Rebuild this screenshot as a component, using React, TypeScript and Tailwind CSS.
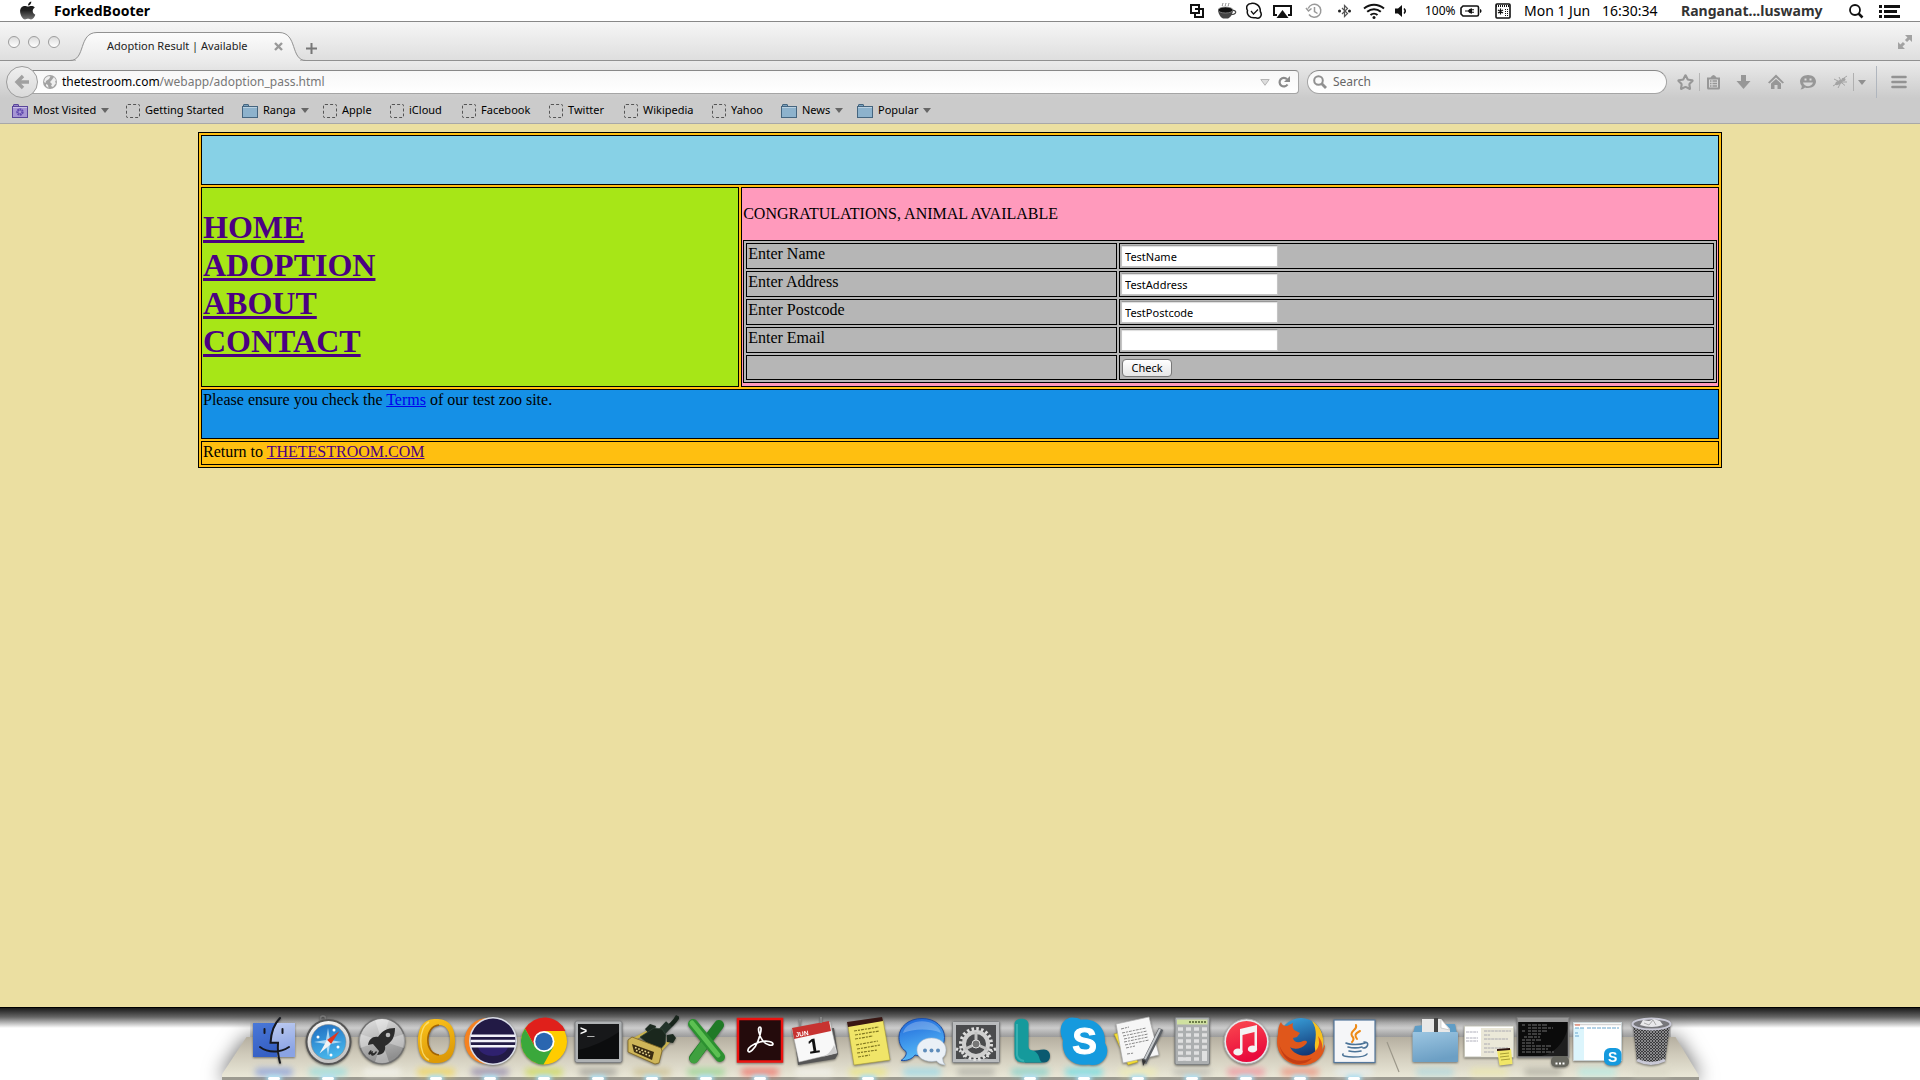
import type { ReactNode } from "react";
import { Star } from "lucide-react";

/* ---------- Menu bar ---------- */

function MenuIcon({ w, label, children, vb = 24 }: { w: string; label: string; children: ReactNode; vb?: number }) {
  return (
    <button aria-label={label} className={`flex shrink-0 items-center ${w}`}>
      <svg width={vb} height={18} viewBox={`0 0 ${vb} 18`} fill="none" stroke="#111" className="shrink-0">
        {children}
      </svg>
    </button>
  );
}

function MenuBar() {
  return (
    <header className="flex h-[21px] shrink-0 items-center justify-between bg-white pl-5 pr-5 text-sm leading-5 text-black">
      <div className="flex items-center">
        <button aria-label="Apple menu" className="w-[34px]">
          <svg width="16" height="19" viewBox="0 0 16 19">
            <defs>
              <linearGradient id="apple" x1="0" y1="0" x2="0" y2="1">
                <stop offset="0" stopColor="#111" />
                <stop offset=".5" stopColor="#222" />
                <stop offset="1" stopColor="#777" />
              </linearGradient>
            </defs>
            <path fill="url(#apple)" d="M8 5.6c-.9 0-1.700-.7-3.200-.7C2 4.900.1 7 .1 10.300c0 3.700 2.500 8.200 4.900 8.200 1.200 0 1.700-.7 3-.7s1.700.7 3 .7c1.900 0 3.500-2.700 4.300-4.800-1.500-.6-2.600-1.900-2.600-3.700 0-1.600.9-2.900 2.100-3.600-.9-1.100-2.200-1.500-3.300-1.500-1.500 0-2.600.7-3.500.7zM8 4.500C7.900 2.500 9.400.7 11.300.4c.2 2-1.400 4-3.300 4.100z" />
          </svg>
        </button>
        <span className="font-bold">ForkedBooter</span>
      </div>
      <div className="flex h-full items-center">
        <MenuIcon w="w-7" label="Clipboard manager">
          <path strokeWidth="2" d="M5 11H1V3h8v4M5 7h8v8H5V11M9 7v4H5" />
        </MenuIcon>
        <MenuIcon w="w-7" label="Caffeine">
          <path fill="#444" stroke="none" d="M0 8c.5 5 3 7.500 5 8.500h5c2.500-1.200 4.500-3.500 5-8.500z" />
          <ellipse cx="7.500" cy="8" rx="7.500" ry="3" fill="#111" stroke="#888" strokeWidth=".8" />
          <path strokeWidth="1.200" d="M14.500 8.500c5-.5 4 4-1.500 4" stroke="#444" />
          <path strokeWidth="1" d="M4.500 4c-1-1.500 1-1.500.3-3M7.500 4c-1-1.500 1-1.500.3-3M10.500 4c-1-1.500 1-1.500.3-3" stroke="#888" />
        </MenuIcon>
        <MenuIcon w="w-[27px]" label="Skype status">
          <path strokeWidth="1.500" d="M5 1.500C8 1 14.500 2 14.300 9.500 17 14 13 17.500 9.500 15.700 3 16.500.5 12 1.500 8.500-.5 5 1.500 1.500 5 1.500z" />
          <path strokeWidth="1.200" d="M5 9l2.500 3L12 7.500" />
        </MenuIcon>
        <MenuIcon w="w-8" label="AirPlay">
          <path strokeWidth="2" d="M4 13H1V4h17v9h-3" />
          <path fill="#111" stroke="none" d="M9.500 8l6 8h-12z" />
        </MenuIcon>
        <MenuIcon w="w-[33px]" label="Time Machine">
          <g stroke="#999" strokeWidth="1.500">
            <path d="M3.200 6.500A6.500 6.500 0 1 1 4 12.500M9.500 5v4.500l3 2M1 6l2.500 3L6.500 6.500" />
          </g>
        </MenuIcon>
        <MenuIcon w="w-[25px]" label="Bluetooth">
          <path stroke="#555" strokeWidth="1.200" d="M4 6l5.500 5.500L6.500 14.500V3.500l3 3L4 12" />
          <circle cx="1.500" cy="9" r="1.500" fill="#222" stroke="none" />
          <circle cx="11.500" cy="9" r="1.500" fill="#222" stroke="none" />
        </MenuIcon>
        <MenuIcon w="w-8" label="Wi-Fi">
          <path strokeWidth="2" d="M1 6.500c6-5 14-5 20 0M4.200 9.800c4-3.500 9.600-3.500 13.600 0M7.500 13c2-1.800 5-1.800 7 0" />
          <circle cx="11" cy="15.500" r="1.500" fill="#111" stroke="none" />
        </MenuIcon>
        <MenuIcon w="w-[30px]" label="Volume">
          <path fill="#111" stroke="none" d="M0 6.500h3L7 3v12l-4-3.500H0z" />
          <path strokeWidth="1.500" d="M9 6.500c1.500 1.500 1.500 3.500 0 5" />
        </MenuIcon>
        <span className="w-[35px] text-xs">100%</span>
        <MenuIcon w="w-[35px]" label="Battery">
          <path strokeWidth="1.600" d="M3 4h14q1.500 0 1.500 1.500v7q0 1.500-1.500 1.500H3L1 12V6z" />
          <path fill="#111" stroke="none" d="M20 7c2 .5 2 3.500 0 4zM5 8.500h3Q9 6.500 12 6.300v5.400Q9 11.500 8 9.500H5zM12 7.200h2v1h-2zM12 9.800h2v1h-2z" />
        </MenuIcon>
        <MenuIcon w="w-[29px]" label="Input menu">
          <rect x="1" y="2" width="14" height="14" rx="1" strokeWidth="1.600" />
          <path strokeWidth="2" strokeDasharray="1 1" d="M1 4h14" />
          <path strokeWidth="1.200" d="M5.500 6.500v6M3 8l5 3M8 8l-5 3" />
          <path strokeDasharray="1 1" d="M10.500 7v7M12.500 7v7" />
        </MenuIcon>
        <span className="flex w-[157px] whitespace-nowrap">
          <span className="w-[78px]">Mon 1 Jun</span>
          <span>16:30:34</span>
        </span>
        <span className="w-[168px] whitespace-nowrap font-bold text-[#333]">Ranganat...luswamy</span>
        <MenuIcon w="w-[30px]" label="Spotlight" vb={20}>
          <circle cx="6" cy="8" r="5" strokeWidth="1.800" />
          <path strokeWidth="2.500" d="M9.500 11.500l4 4" />
        </MenuIcon>
        <MenuIcon w="w-[21px]" label="Notification Center" vb={21}>
          <path strokeWidth="3" d="M0 4.500h3M0 9.500h3M0 14.500h3M5 4.500h16M5 9.500h13M5 14.500h16" />
        </MenuIcon>
      </div>
    </header>
  );
}

/* ---------- Browser chrome ---------- */

function TabStrip() {
  return (
    <div className="flex h-[39px] items-end bg-linear-to-b from-[#f6f6f6] to-[#dedede] shadow-[inset_0_-1px_0_#919191]">
      <div className="flex w-[70px] gap-2 self-center pl-2">
        <button aria-label="Close window" className="size-3 rounded-full border border-[#9d9d9d] bg-linear-to-b from-[#dcdcdc] to-white" />
        <button aria-label="Minimise window" className="size-3 rounded-full border border-[#9d9d9d] bg-linear-to-b from-[#dcdcdc] to-white" />
        <button aria-label="Zoom window" className="size-3 rounded-full border border-[#9d9d9d] bg-linear-to-b from-[#dcdcdc] to-white" />
      </div>
      <div className="relative flex h-[29px] w-[236px] items-center pl-[37px] text-[11px] text-[#222]">
        <svg width="236" height="29" viewBox="0 0 236 29" className="absolute inset-0">
          <defs>
            <linearGradient id="tab" x1="0" y1="0" x2="0" y2="1">
              <stop offset="0" stopColor="#fcfcfc" />
              <stop offset="1" stopColor="#ebebeb" />
            </linearGradient>
          </defs>
          <path fill="url(#tab)" stroke="#919191" d="M0 28.500c16 0 8-28 27-28H209c19 0 11 28 27 28" />
          <path stroke="#ebebeb" d="M6 28.500h224" />
        </svg>
        <a href="#tab" className="relative w-[167px] whitespace-nowrap">Adoption Result | Available</a>
        <button aria-label="Close tab" className="relative">
          <svg width="9" height="9" viewBox="0 0 9 9" stroke="#999" strokeWidth="2.400">
            <path d="M1 1l7 7M8 1L1 8" />
          </svg>
        </button>
      </div>
      <button aria-label="New tab" className="mb-[7px]">
        <svg width="11" height="11" viewBox="0 0 11 11" stroke="#777" strokeWidth="2">
          <path d="M5.500 0v11M0 5.500h11" />
        </svg>
      </button>
      <button aria-label="Full screen" className="mb-3 ml-auto mr-2">
        <svg width="14" height="14" viewBox="0 0 14 14" fill="#a2a2a2" stroke="#a2a2a2" strokeWidth="3">
          <path stroke="none" d="M7 0h7v7zM0 7v7h7z" />
          <path d="M8 6l3-3M6 8l-3 3" />
        </svg>
      </button>
    </div>
  );
}

function ToolButton({ w, label, children }: { w: string; label: string; children: ReactNode }) {
  return (
    <button aria-label={label} className={`flex shrink-0 items-center ${w}`}>
      <svg width="16" height="18" viewBox="0 0 16 18" fill="#979797" className="shrink-0">
        {children}
      </svg>
    </button>
  );
}

function NavBar() {
  return (
    <div className="flex h-[38px] items-center pt-1 pl-[6px]">
      <button aria-label="Back" className="z-10 flex size-8 shrink-0 items-center justify-center rounded-full border border-[#9c9c9c] bg-linear-to-b from-[#efefef] to-[#dadada]">
        <svg width="16" height="16" viewBox="0 0 16 16" fill="none" stroke="#a0a0a0" strokeWidth="3.400">
          <path d="M15 8H3M9 2L3 8l6 6" />
        </svg>
      </button>
      <div className="-ml-1.5 flex h-6 flex-1 items-center rounded-r-sm border border-[#a5a5a5] border-t-[#888] bg-linear-to-b from-[#f7f7f7] to-white pl-[10px]">
        <svg width="14" height="14" viewBox="0 0 14 14" className="mr-[5px] shrink-0">
          <circle cx="7" cy="7" r="7" fill="#a3a3a3" />
          <path fill="#efefef" d="M2 3.500C4 1 6 1 7.500 1.500L6 4 3 6 2.500 8 1 7zM8 6l3-4 2 3-1 2 1 1-3 4-2-1 1-2-2-2zM3 9l2 1 .5 3L3 11z" />
        </svg>
        <div role="textbox" aria-label="Address" className="flex-1 whitespace-nowrap text-xs text-[#777]">
          <span className="text-black">thetestroom.com</span>/webapp/adoption_pass.html
        </div>
        <svg width="10" height="7" viewBox="0 0 10 7" className="mr-[8px]" fill="#ddd" stroke="#b5b5b5">
          <path d="M.8.5h8.400L5 6.300z" />
        </svg>
        <button aria-label="Reload" className="mr-2">
          <svg width="12" height="12" viewBox="0 0 12 12" fill="none" stroke="#8a8a8a" strokeWidth="2.200">
            <path d="M9.500 8.500A4.300 4.300 0 1 1 9 3.200" />
            <path fill="#8a8a8a" stroke="none" d="M12 0v6H6z" />
          </svg>
        </button>
      </div>
      <div className="ml-2 flex h-6 w-[360px] items-center rounded-full border border-[#a5a5a5] border-t-[#888] bg-linear-to-b from-[#f7f7f7] to-white pl-[5px]">
        <svg width="14" height="14" viewBox="0 0 14 14" fill="none" stroke="#909090" className="shrink-0">
          <circle cx="5.500" cy="5.500" r="4.300" strokeWidth="2" />
          <path strokeWidth="2.800" d="M8.500 8.500l4.500 4.500" />
        </svg>
        <input aria-label="Search" placeholder="Search" className="ml-[6px] w-full bg-transparent text-xs text-[#555] outline-none placeholder:text-[#666]" />
      </div>
      <div className="ml-[10px] flex items-center">
        <button aria-label="Bookmark this page" className="w-[22px]">
          <Star size={17} stroke="#979797" strokeWidth={3} />
        </button>
        <span className="mr-[6px] h-[18px] w-px bg-[#b5b5b5]" />
        <ToolButton w="w-[30px]" label="Bookmarks">
          <path fillRule="evenodd" d="M1 4.500h3.500q3-5 6 0H14V15q0 1.500-1.500 1.500h-10Q1 16.500 1 15zM3 6.500v8h9v-8z" />
          <path d="M4 7.300h1.500v1.500H4zM6.500 7.300H11v1.500H6.500zM4 9.800h1.500v1.500H4zM6.500 9.800H11v1.500H6.500zM4 12.300h1.500v1.500H4zM6.500 12.300H11v1.500H6.500z" />
        </ToolButton>
        <ToolButton w="w-8" label="Downloads">
          <path d="M5 2h5v6h4.500l-7 8-7-8H5z" />
        </ToolButton>
        <ToolButton w="w-8" label="Home">
          <path d="M8 1.500l8 8-1.500 1L8 4.500l-6.500 6L0 9.500z" />
          <path d="M3 10.500L8 6l5 4.500V16H9.500v-4h-3v4H3z" />
        </ToolButton>
        <ToolButton w="w-8" label="Chat">
          <path fillRule="evenodd" d="M8 2c4.500 0 8 2.800 8 6.500S12.500 15 8 15q-1.500 0-3-.5-2 2-4.500 2 1.500-1.800 1.300-3.500Q0 11 0 8.500C0 4.800 3.500 2 8 2zM4.500 5.500v2h2v-2zm5 0v2h2v-2zM3 9.500c1.500 5 8.500 5 10 0z" />
        </ToolButton>
        <ToolButton w="w-[21px]" label="Firebug">
          <g opacity=".8">
            <ellipse cx="7" cy="9.500" rx="4" ry="2" transform="rotate(-25 7 9.500)" />
            <ellipse cx="11.500" cy="6.500" rx="2" ry="1.700" />
            <path fill="none" stroke="#979797" d="M6 8L2 6M6 10l-5 3M8 11l-2 4M9 8L7 4M10 10l3 2.500M12 5l3-2M10 9l5 0" />
          </g>
        </ToolButton>
        <span className="mr-[4px] h-[18px] w-px bg-[#b0b0b0]" />
        <button aria-label="Firebug options" className="w-[18px]">
          <svg width="8" height="5" viewBox="0 0 8 5" fill="#909090"><path d="M0 0h8L4 5z" /></svg>
        </button>
        <span className="mr-[14px] h-8 w-px bg-[#b0b6be]" />
        <button aria-label="Open menu" className="mr-[13px]">
          <svg width="16" height="14" viewBox="0 0 16 14" stroke="#939393" strokeWidth="2.600" strokeLinecap="round">
            <path d="M1.500 2h13M1.500 7h13M1.500 12h13" />
          </svg>
        </button>
      </div>
    </div>
  );
}

type Mark = { name: string; kind: "smart" | "folder" | "page"; w: string };

const bookmarks: Mark[] = [
  { name: "Most Visited", kind: "smart", w: "w-[114px]" },
  { name: "Getting Started", kind: "page", w: "w-[116px]" },
  { name: "Ranga", kind: "folder", w: "w-[81px]" },
  { name: "Apple", kind: "page", w: "w-[67px]" },
  { name: "iCloud", kind: "page", w: "w-[72px]" },
  { name: "Facebook", kind: "page", w: "w-[87px]" },
  { name: "Twitter", kind: "page", w: "w-[75px]" },
  { name: "Wikipedia", kind: "page", w: "w-[88px]" },
  { name: "Yahoo", kind: "page", w: "w-[69px]" },
  { name: "News", kind: "folder", w: "w-[76px]" },
  { name: "Popular", kind: "folder", w: "w-[76px]" },
];

function Bookmarks() {
  return (
    <nav className="flex h-6 items-center pb-px pl-3 text-[11px] text-black">
      {bookmarks.map((b) => (
        <a key={b.name} href="#bookmark" className={`flex shrink-0 items-center whitespace-nowrap ${b.w}`}>
          {b.kind === "page" ? (
            <span className="mr-[5px] size-[14px] rounded-xs border border-dashed border-[#555]" />
          ) : (
            <svg width="16" height="14" viewBox="0 0 16 14" className="mr-[5px]">
              <path d="M1.500 3V1q0-.5.5-.5h4q.5 0 .5.5v2z" fill={b.kind === "smart" ? "#9a86c8" : "#7aa2bf"} stroke={b.kind === "smart" ? "#59459a" : "#45657f"} />
              <rect x=".5" y="2.500" width="15" height="11" fill={b.kind === "smart" ? "#a695d4" : "#8db2cc"} stroke={b.kind === "smart" ? "#59459a" : "#45657f"} />
              <path d="M1 3.500h14" stroke="#fff" opacity=".4" />
              {b.kind === "smart" && <circle cx="8" cy="8" r="2.500" fill="none" stroke="#6048ae" strokeWidth="2.400" strokeDasharray="1.700 .5" />}
            </svg>
          )}
          {b.name}
          {b.kind !== "page" && (
            <svg width="8" height="5" viewBox="0 0 8 5" className="ml-[5px]" fill="#666"><path d="M0 0h8L4 5z" /></svg>
          )}
        </a>
      ))}
    </nav>
  );
}

/* ---------- Zoo page ---------- */

const fields = [
  { label: "Enter Name", id: "name", value: "TestName" },
  { label: "Enter Address", id: "address", value: "TestAddress" },
  { label: "Enter Postcode", id: "postcode", value: "TestPostcode" },
  { label: "Enter Email", id: "email", value: "" },
];

function AdoptionForm() {
  return (
    <table className="w-full table-fixed border-separate border-spacing-[2px] border border-black bg-[#b6b6b6]">
      <colgroup>
        <col className="w-[38.4%]" />
        <col />
      </colgroup>
      <tbody>
        {fields.map((f) => (
          <tr key={f.id} className="h-[26px]">
            <td className="border border-black p-px align-top">
              <label htmlFor={f.id}>{f.label}</label>
            </td>
            <td className="border border-black p-px align-top">
              <input
                id={f.id}
                defaultValue={f.value}
                className="block h-[22px] w-[157px] border border-[#c4c4c4] border-t-[#999] bg-white px-[3px] font-['Noto_Sans','Open_Sans',sans-serif] text-[11px] text-black shadow-[inset_0_1px_1px_#ddd]"
              />
            </td>
          </tr>
        ))}
        <tr className="h-[25px]">
          <td className="border border-black p-px" />
          <td className="border border-black p-px align-middle">
            <button className="ml-px block h-[18px] w-[50px] rounded-[4px] border border-[#777] bg-linear-to-b from-white to-[#e6e6e6] font-['Noto_Sans','Open_Sans',sans-serif] text-[11px] leading-4 text-black">
              Check
            </button>
          </td>
        </tr>
      </tbody>
    </table>
  );
}

const links = [
  { name: "HOME", href: "#home" },
  { name: "ADOPTION", href: "#adoption" },
  { name: "ABOUT", href: "#about" },
  { name: "CONTACT", href: "#contact" },
];

function ZooPage() {
  return (
    <main className="flex-1 bg-[#ebdfa1] pt-2 font-['Liberation_Serif',serif] text-base leading-[18px] text-black">
      <table className="mx-auto w-[calc(80%-12px)] table-fixed border-separate border-spacing-[2px] border border-black bg-[#ffbf10]">
        <colgroup>
          <col className="w-[35.5%]" />
          <col />
        </colgroup>
        <tbody>
          <tr className="h-[50px]">
            <td colSpan={2} className="border border-black bg-[#87d1e6] p-px" />
          </tr>
          <tr className="h-[200px]">
            <td className="border border-black bg-[#a7e617] p-px align-top">
              <h1 className="pt-[19px] text-[32px] leading-[38px] font-bold text-[#4b0082]">
                {links.map((l) => (
                  <span key={l.name} className="block">
                    <a className="underline" href={l.href}>{l.name}</a>
                  </span>
                ))}
              </h1>
            </td>
            <td className="border border-black bg-[#ff9abc] p-px align-top">
              <p className="pt-4 pb-[17px]">CONGRATULATIONS, ANIMAL AVAILABLE</p>
              <AdoptionForm />
            </td>
          </tr>
          <tr className="h-[50px]">
            <td colSpan={2} className="border border-black bg-[#1590e6] p-px align-top">
              Please ensure you check the <a href="#terms" className="text-[#0000ee] underline">Terms</a> of our test zoo site.
            </td>
          </tr>
          <tr className="h-[24px]">
            <td colSpan={2} className="border border-black bg-[#ffbf10] p-px align-top">
              Return to <a href="#testroom" className="text-[#4b0082] underline">THETESTROOM.COM</a>
            </td>
          </tr>
        </tbody>
      </table>
    </main>
  );
}

/* ---------- Dock ---------- */

const Finder = (
  <>
    <rect x="6" y="9" width="42" height="34" fill="url(#finderR)" />
    <path d="M6 9h24c-4 6-5 12-6 20h6v14H6z" fill="url(#finderL)" />
    <g fill="none" stroke="#16181f" strokeWidth="2" strokeLinecap="round">
      <path d="M33 4c-7 7-9 15-9.500 24.700H31c-.5 7 0 13 2 20M13 33c8 6 20 6 29 0" />
      <path d="M17.500 15v4M35.500 15v4" />
    </g>
  </>
);

const Safari = (
  <>
    <circle cx="22" cy="4.500" r="2.500" fill="none" stroke="#777" strokeWidth="1.500" />
    <circle cx="27.500" cy="28" r="23" fill="#555" />
    <circle cx="27.500" cy="28" r="21" fill="url(#chrome)" />
    <circle cx="27.500" cy="28" r="17.500" fill="url(#safariBlue)" stroke="#888" strokeWidth=".6" />
    <path d="M27 14l2 12 12 2-12 2-2 12-2-12-12-2 12-2z" fill="#bfe3f8" opacity=".85" />
    <g fill="#fff">
      <circle cx="17" cy="23" r="1.500" />
      <circle cx="37" cy="33" r="1.500" />
      <circle cx="33" cy="16" r="1.500" />
      <circle cx="30" cy="41" r="1.500" />
    </g>
    <path d="M38.500 17L30 30l-4-4z" fill="#e2351d" />
    <path d="M18.500 39.500L26 26l4 4z" fill="#f3f3f3" />
  </>
);

const Rocket = (
  <>
    <circle cx="27" cy="27" r="23.500" fill="#6f6f6f" />
    <circle cx="27" cy="27" r="22" fill="url(#silver)" />
    <path d="M27 27L5 20a22 22 0 0 0 0 14zM27 27l22-7a22 22 0 0 1 0 14zM27 27L20 6a22 22 0 0 1 14 0zM27 27l-7 21a22 22 0 0 0 14 0z" fill="#fff" opacity=".3" />
    <path fill="#2b2b2b" d="M40 14c-8 0-13 3-17 9-5-1-9 2-10 8l5-1 6 7-2 4c6 0 9-4 8-9 7-4 10-9 10-18zM16 36c-4 3-3 6 0 4 0 3 4 2 6-2l-1-1c-2 3-4 3-3 0-2 1-3 0-1-1z" />
    <circle cx="33" cy="21" r="2.300" fill="#bbb" />
  </>
);

const Outlook = (
  <>
    <path fillRule="evenodd" fill="url(#gold)" d="M27 5c11 0 19 5 19 22s-8 22-19 22S9 44 9 27 17 5 27 5zm3 6c-7 0-11 6-11 15s4 15 11 15 11-6 11-15-4-15-11-15z" />
    <path fill="none" stroke="#fbe37a" strokeWidth="1.500" d="M20 8c-11 6-11 32 0 38" opacity=".8" />
    <path fill="none" stroke="#a36400" strokeWidth="1.500" d="M30 11c-15 1-15 29 0 30" />
  </>
);

const Eclipse = (
  <>
    <circle cx="24.500" cy="27" r="23" fill="#f58220" />
    <circle cx="30" cy="27" r="24" fill="#d9dce6" />
    <circle cx="30" cy="27" r="22.500" fill="#221a45" />
    <path d="M15 33h30c-3 12-27 12-30 0z" fill="#2f216f" />
    <path d="M8 21.700h44M7.500 27h45M8 32.300h44" stroke="#f2f2fa" strokeWidth="2.400" />
  </>
);

const Chrome = (
  <>
    <circle cx="27" cy="27.500" r="23" fill="#fc0" />
    <path d="M27 27.500V17h21.500A23 23 0 0 0 8 14.500L18 33z" fill="#e0201b" />
    <path d="M8 14.500a23 23 0 0 0 18.500 36L36.500 32.500 27 38l-9-5z" fill="#3aa83b" />
    <circle cx="27" cy="27.500" r="10.500" fill="#fff" />
    <circle cx="27" cy="27.500" r="8.700" fill="#2a66b0" />
  </>
);

const Terminal = (
  <>
    <rect x="4" y="7" width="47" height="41.500" rx="2" fill="#aeb1b3" stroke="#7c7e80" />
    <rect x="7" y="10" width="41" height="35" fill="#17181a" />
    <path d="M7 36c14-3 27-9 41-18v27H7z" fill="#000" opacity=".45" />
    <text x="9" y="21" fill="#fff" fontSize="12" fontWeight="bold" fontFamily="Liberation Mono, monospace">&gt;_</text>
  </>
);

const Serial = (
  <>
    <path d="M53 2q-4 8-15 15" fill="none" stroke="#18251c" strokeWidth="4.500" />
    <path d="M44 10l-11 12" stroke="#22332a" strokeWidth="8" />
    <path d="M26 16L9 25M47 24L34 38" stroke="#c9b24d" strokeWidth="3" />
    <path d="M20 15l5-5 6 2-2 6-5 2zM42 21l6-1 3 4-3 5-6-1z" fill="#1c2a20" />
    <path d="M15 23l14-9 8 1 4 6-1 9-7 8z" fill="#1a271d" stroke="#33463a" strokeWidth=".7" />
    <path d="M3 26l4-3 29 11 1 3-3 12-4 1L3 38z" fill="#cfb659" stroke="#7c6522" strokeWidth=".8" />
    <path d="M7 30l22 8-2 8-18-8z" fill="#3b2d12" />
    <path d="M10 33.500l16 6M11 36.500l14 5.500" stroke="#eddc95" strokeWidth="1.600" strokeDasharray="1.600 1.800" />
  </>
);

const Excel = (
  <g strokeLinecap="round" fill="none">
    <path d="M40 11L15 44" stroke="#1f7a27" strokeWidth="10" />
    <path d="M15 45l9-13" stroke="#3fa03f" strokeWidth="9" />
    <path d="M14 10l27 33" stroke="#2c9130" strokeWidth="10" />
    <path d="M13 9l26 32" stroke="#5cc052" strokeWidth="5" />
  </g>
);

const Acrobat = (
  <>
    <rect x="5" y="5" width="44" height="42.500" fill="#240b0c" stroke="#ec1310" strokeWidth="2.500" />
    <path fill="none" stroke="#fff" strokeWidth="1.700" d="M27 13c-3 0-1 9 3 14s10 5 10 3-6-4-13-2-13 6-12 9 7-2 10-10 4-14 2-14z" />
  </>
);

const Calendar = (
  <>
    <path d="M7 20l40-6 4 26-3 5-37 6z" fill="#555" />
    <path d="M5 15l38-7 7 31-38 9z" fill="#f8f8f8" stroke="#bbb" strokeWidth=".5" />
    <path d="M5 14l37-7 2 10-37 8z" fill="#c73330" />
    <path d="M13 12V5M34 9V3" stroke="#888" strokeWidth="2" />
    <text x="9" y="23" transform="rotate(-9 9 23)" fill="#fff" fontSize="6.500" fontWeight="bold" fontFamily="Liberation Sans, sans-serif">JUN</text>
    <text x="22" y="40" transform="rotate(-9 22 40)" fill="#111" fontSize="21" fontWeight="bold" fontFamily="Liberation Sans, sans-serif">1</text>
    <path d="M50 39l-15 4c5-2 9-5 12-12z" fill="#ccc" />
  </>
);

const Stickies = (
  <>
    <path d="M7 12l35-6 7 40-36 5z" fill="#f0e568" stroke="#a99e35" strokeWidth=".6" />
    <path d="M6 8l35-5 1 4-35 6z" fill="#3a1713" />
    <path d="M13 17l25-4M14 21l24-4M14 25l18-3M15 31l22-4M16 35l23-4M16 39l20-3M17 43l12-2" stroke="#827821" strokeWidth="1.200" strokeDasharray="3 1 2 1" />
  </>
);

const Messages = (
  <>
    <path d="M27 4.500c13 0 22.500 8 22.500 19S40 42 27 42q-4 0-7-1c-3 4-8 6-14 5.500 4-3 6-6 5-9C6 34 4 29 4 23.500c0-11 10-19 23-19z" fill="url(#msg)" stroke="#1f4fa5" />
    <path d="M8 19C12 4 41 3 46 19 34 14 18 15 8 19z" fill="#fff" opacity=".25" />
    <path d="M36.500 24C45 24 51 29 51 36q0 5-3.500 8 0 4 2.500 7-6-.5-8.500-4C30 49 22 44 22 36c0-7 6-12 14.500-12z" fill="#eaf0f6" stroke="#b2c0cf" strokeWidth=".6" />
    <g fill="#5e8cba">
      <circle cx="30" cy="36.500" r="2" />
      <circle cx="36.500" cy="36.500" r="2" />
      <circle cx="43" cy="36.500" r="2" />
    </g>
  </>
);

const Preferences = (
  <>
    <rect x="3.500" y="7.500" width="47" height="41" rx="1" fill="#b9bbbd" stroke="#818385" />
    <rect x="7" y="11" width="40" height="34" fill="#4a4b4d" />
    <g fill="none">
      <circle cx="27" cy="30" r="15" stroke="#ddd" strokeWidth="4" strokeDasharray="2.500 2.200" />
      <circle cx="27" cy="30" r="12" stroke="#cfcfcf" strokeWidth="4" />
      <path d="M27 30V18M27 30l11 5M27 30l-11 5" stroke="#c0c0c0" strokeWidth="3" />
      <path d="M7 35q8 2 9 10M47 35q-8 2-9 10" stroke="#ddd" strokeWidth="3" strokeDasharray="2 1.500" />
    </g>
    <circle cx="27" cy="30" r="4" fill="#777" stroke="#ddd" />
  </>
);

const Lync = (
  <>
    <path d="M24 35.500c6 3 10 0 17 0 8 0 8 13 0 13H22z" fill="#0b5a70" />
    <path d="M11.500 10c0-7 14-7 14 0v22q0 4 4 4.500c4 1 6 4 7 8q1 4 4 4H20q-8.500 0-8.500-8z" fill="#159a9c" />
    <path d="M14 10v31q1 5 7 6" fill="none" stroke="#4cc0c0" strokeWidth="2" opacity=".6" />
  </>
);

const Skype = (
  <>
    <path d="M15 3.500q6 0 9 2.200C39 3.500 49 14 48 29c7 11-3 25-16 21.500C15 53 4 42 6 26 0 14 6 4 15 3.500z" fill="#159ade" />
    <text x="27.500" y="40" textAnchor="middle" fill="#fff" stroke="#fff" fontSize="37" fontWeight="bold" fontFamily="Liberation Sans, sans-serif">S</text>
  </>
);

const TextEdit = (
  <>
    <path d="M3 20l8-2 16 30-10 3z" fill="#f2dc34" stroke="#a99627" strokeWidth=".5" />
    <path d="M5 10l33-7 10 38-36 8z" fill="#f6f6f6" stroke="#aaa" strokeWidth=".7" />
    <path d="M10 15l8-2M11 19l24-5M12 22l24-5M13 25l24-5M13 28l24-5M14 31l24-5M15 34l9-2M16 40l7-1" stroke="#888" strokeDasharray="3 1 2 1" />
    <path d="M50 15L33 49" stroke="#5d6166" strokeWidth="5" />
    <path d="M49 15L34 45" stroke="#c6cacd" strokeWidth="2" />
    <path d="M31 45l4 2-3 5z" fill="#333" />
  </>
);

const Calculator = (
  <>
    <rect x="10" y="3.500" width="34.500" height="47" rx="1.500" fill="#acafb0" stroke="#7d8081" />
    <rect x="12" y="5.500" width="30.500" height="5" fill="#cfe0a0" />
    <path d="M24 8h17" stroke="#6d7d4a" strokeWidth="2" strokeDasharray="2 1" />
    <path d="M13 15h30M13 21h30M13 27h30M13 33h30M13 39h21M13 45h21" stroke="#dfe0e0" strokeWidth="3.600" strokeDasharray="5 3" />
    <path d="M37 37h5v10h-5zM13 43.200h13v3.600H13z" fill="#dfe0e0" />
  </>
);

const ITunes = (
  <>
    <circle cx="27.500" cy="27.500" r="22.500" fill="#e6e6e8" stroke="#aaa" />
    <circle cx="27.500" cy="27.500" r="20.500" fill="url(#itunes)" />
    <g fill="#f3f3f3">
      <path d="M21 15l17-4v24h-2.500V18L23.500 21v17H21z" />
      <ellipse cx="19" cy="38" rx="4.700" ry="3.600" />
      <ellipse cx="33.500" cy="35" rx="4.700" ry="3.600" />
    </g>
  </>
);

const Firefox = (
  <>
    <circle cx="28" cy="26" r="22" fill="url(#fxBlue)" />
    <path d="M39 7c15 9 15 32 0 41 6-8 2-12 3-19s2-14-3-22z" fill="#f8c01e" />
    <path d="M8 8c1 3 3 4 6 4l6-3c-1 4 0 7 3 8l4 2-3 4-4 1c1 5 6 5 10 3 4-1 5 1 3 3-4 5-12 6-16 3 5 10 20 12 27 2 3-5 2-9 1-13 4 5 5 9 4 15l3-7C52 44 40 52 27 51 10 50 1 36 5 20q0-8 3-12z" fill="#e0571b" />
    <path d="M6 29c3 15 19 22 33 15-8 10-29 9-33-15z" fill="#b8320f" opacity=".7" />
  </>
);

const Java = (
  <>
    <rect x="7" y="6" width="41" height="42.500" fill="#f5f6f8" stroke="#54779c" strokeWidth="1.200" />
    <g fill="none" strokeLinecap="round">
      <path d="M29 11c2 5-7 6-4 11 2 2 2 4 0 6M33 17c-6 3-5 5-3 8" stroke="#ee8a16" strokeWidth="2" />
      <path d="M19 29c4 2 14 2 19 0M37 28c6 0 4 6-1 6M21 33c4 1 10 1 14 0M22 37c4 1 8 1 12 0M16 40c-3 4 22 4 24 0" stroke="#4c7498" strokeWidth="1.600" />
    </g>
  </>
);

const Folder = (
  <>
    <path d="M5 20l2-8 20-2h20l2 10z" fill="#5f9dc6" />
    <path d="M14 5h19l9 10v8H14z" fill="#e8e8e8" />
    <path d="M28 4v16" stroke="#444" strokeWidth="4" />
    <path d="M33 5l9 11-9-2z" fill="#fff" stroke="#aaa" strokeWidth=".5" />
    <rect x="4.500" y="18" width="45.500" height="30" rx="1" fill="url(#folder)" />
  </>
);

const NotesWindow = (
  <>
    <rect x="2.500" y="12" width="49" height="31" fill="#fff" stroke="#c4c4b8" />
    <rect x="19" y="14" width="32" height="29" fill="#ebe8d8" />
    <path d="M4 18h12M4 24h12M4 27h12M22 17h27M22 21h6M22 25h24M22 30h6M22 34h24M22 38h10" stroke="#9a9aa8" strokeWidth=".8" strokeDasharray="3 .6" />
    <path d="M35 36l14-1 1.500 15-13 1.500z" fill="#f1e668" />
    <path d="M35 35l13-1v2l-13 1z" fill="#2e1612" />
    <path d="M38 40l9-1M38 43l9-1M39 46l9-1" stroke="#a89d35" />
  </>
);

const TerminalWindow = (
  <>
    <rect x="1.500" y="4" width="51" height="39" fill="#0b0b0b" stroke="#858585" strokeWidth="1.500" />
    <path d="M2 6h50" stroke="#999" strokeWidth="4" />
    <path d="M6 11h4M12 11h20M12 14h25M6 17h3M12 17h19M12 20h14M8 23h16M6 26h20M6 29h12M6 32h30M6 35h26M6 38h32" stroke="#707070" strokeDasharray="3 1 5 1" />
    <path d="M52 14v28H25q20-4 27-28z" fill="#777" opacity=".18" />
    <rect x="35" y="42" width="18" height="11" rx="5" fill="#67675f" />
    <path d="M39.500 49.500h9" stroke="#fff" strokeWidth="2" strokeDasharray="2 1.500" />
  </>
);

const SkypeWindow = (
  <>
    <rect x="3.500" y="8.500" width="48" height="38" fill="#fff" stroke="#c9d3d6" />
    <rect x="4" y="14" width="10" height="32" fill="#dcf5fc" />
    <path d="M4 10.500h47" stroke="#d5d5d5" strokeWidth="1.500" />
    <path d="M5 11h5" stroke="#e06040" />
    <path d="M5 14h10M17 14h32M5 19h3M5 22h4" stroke="#6aa7cf" strokeDasharray="4 1" />
    <rect x="34" y="34" width="17.500" height="17.500" rx="6" fill="#159ade" />
    <text x="42.700" y="48" textAnchor="middle" fill="#fff" fontSize="14" fontWeight="bold" fontFamily="Liberation Sans, sans-serif">S</text>
  </>
);

const Trash = (
  <>
    <path d="M9 10l4 37q14 7 28 0l5-37z" fill="#3a3a3c" />
    <path d="M9 10l4 37q14 7 28 0l5-37z" fill="url(#mesh)" />
    <ellipse cx="27.500" cy="10" rx="19" ry="5.500" fill="#77777b" stroke="#c9c9d6" strokeWidth="2" />
    <path d="M16 11l3-5 6 1 5-2 6 2 3 4q-11 4-23 0z" fill="#e8e8ea" />
    <path d="M20 9l5 2 4-5 3 5" fill="none" stroke="#aaa" />
    <path d="M13 46q14 7 28 0" fill="none" stroke="#c9c9d6" strokeWidth="3" />
  </>
);

type DockItem = { name: string; art: ReactNode; on?: boolean; glow?: string };

const apps: DockItem[] = [
  { name: "Finder", art: Finder, on: true, glow: "bg-[#7d97dc]" },
  { name: "Safari", art: Safari, on: true, glow: "bg-[#8fdde0]" },
  { name: "Launchpad", art: Rocket, glow: "bg-[#f4f4f0]" },
  { name: "Outlook", art: Outlook, on: true, glow: "bg-[#f1d24a]" },
  { name: "Eclipse", art: Eclipse, on: true, glow: "bg-[#8a80a8]" },
  { name: "Chrome", art: Chrome, on: true, glow: "bg-[#c8d84a]" },
  { name: "Terminal", art: Terminal, on: true, glow: "bg-[#9b9a94]" },
  { name: "Serial", art: Serial, on: true, glow: "bg-[#c8bc8c]" },
  { name: "Excel", art: Excel, on: true, glow: "bg-[#8fd28b]" },
  { name: "Acrobat", art: Acrobat, on: true, glow: "bg-[#f0645c]" },
  { name: "Calendar", art: Calendar, glow: "bg-[#f4f4f0]" },
  { name: "Stickies", art: Stickies, on: true, glow: "bg-[#ece678]" },
  { name: "Messages", art: Messages, glow: "bg-[#8fd6ec]" },
  { name: "System Preferences", art: Preferences, glow: "bg-[#aaaaa2]" },
  { name: "Lync", art: Lync, on: true, glow: "bg-[#79cfc9]" },
  { name: "Skype", art: Skype, on: true, glow: "bg-[#5cdce8]" },
  { name: "TextEdit", art: TextEdit, on: true, glow: "bg-[#f0eeb0]" },
  { name: "Calculator", art: Calculator, on: true, glow: "bg-[#b9b9b2]" },
  { name: "iTunes", art: ITunes, on: true, glow: "bg-[#f08a98]" },
  { name: "Firefox", art: Firefox, on: true, glow: "bg-[#ee8a74]" },
  { name: "Java", art: Java, on: true, glow: "bg-[#e4eef2]" },
];

const shelf: DockItem[] = [
  { name: "Documents", art: Folder, glow: "bg-[#a9d6e0]" },
  { name: "Stickies window", art: NotesWindow, glow: "bg-[#ebe6a8]" },
  { name: "Terminal window", art: TerminalWindow, glow: "bg-[#aaa89c]" },
  { name: "Skype window", art: SkypeWindow, glow: "bg-[#b0ece6]" },
  { name: "Trash", art: Trash, glow: "bg-[#d9d7c6]" },
];

function DockIcon({ item }: { item: DockItem }) {
  return (
    <button aria-label={item.name} className="relative flex h-[66px] w-[54px] shrink-0 flex-col">
      <span className={`absolute bottom-1 left-2 h-2 w-[38px] rounded-full opacity-70 blur-[3px] ${item.glow}`} />
      <svg width="54" height="54" viewBox="0 0 54 54" className="relative drop-shadow-[0_1px_1px_rgba(0,0,0,0.45)]">
        {item.art}
      </svg>
      {item.on && <span className="absolute bottom-0 left-[21px] h-[3px] w-3 rounded-xs bg-white shadow-[0_0_4px_2px_#a9def5]" />}
    </button>
  );
}

function Gradient({ id, from, to }: { id: string; from: string; to: string }) {
  return (
    <linearGradient id={id} x1="0" y1="0" x2="0.3" y2="1">
      <stop offset="0" stopColor={from} />
      <stop offset="1" stopColor={to} />
    </linearGradient>
  );
}

function Dock() {
  return (
    <footer className="relative flex h-[73px] shrink-0 items-end justify-center overflow-hidden border-t border-black bg-white">
      <svg width="0" height="0" className="absolute">
        <defs>
          <Gradient id="finderL" from="#4a78d8" to="#3660c4" />
          <Gradient id="finderR" from="#c3d0f2" to="#8aa3e4" />
          <Gradient id="silver" from="#e4e4e4" to="#8f8f8f" />
          <Gradient id="chrome" from="#fafafa" to="#c4c4c4" />
          <Gradient id="safariBlue" from="#1f6cc0" to="#46b4ea" />
          <Gradient id="gold" from="#fcc41c" to="#dd9a08" />
          <Gradient id="msg" from="#1c62d8" to="#58bdf8" />
          <Gradient id="itunes" from="#fb4a50" to="#e80a3c" />
          <Gradient id="fxBlue" from="#3ba6e0" to="#10316f" />
          <Gradient id="folder" from="#9cc6e2" to="#6c9fc4" />
          <pattern id="mesh" width="3" height="3" patternUnits="userSpaceOnUse">
            <path d="M0 0l3 3M3 0L0 3" stroke="#a5a5a8" strokeWidth=".7" />
          </pattern>
        </defs>
      </svg>
      <div className="absolute inset-x-0 top-0 h-5 bg-linear-to-b from-[#1c1c1c] via-[#666] via-45% to-transparent" />
      <div className="relative flex pl-[25px] pr-[21px]">
        <div className="absolute inset-x-0 top-0 bottom-0 drop-shadow-[0_0_10px_rgba(0,0,0,0.6)]">
          <div className="absolute inset-x-0 bottom-0 h-[43px] bg-linear-to-b from-[#b5afa0] via-[#cfcaba] via-40% to-[#edebdb] [clip-path:polygon(25px_0,calc(100%-23px)_0,100%_38px,100%_100%,0_100%,0_38px)]" />
        </div>
        <div className="absolute inset-x-7 bottom-[43px] h-5 bg-linear-to-b from-transparent to-[#777]/40" />
        <div className="absolute inset-x-0 bottom-0 h-[3px] bg-[#9c9a90]" />
        {apps.map((a) => (
          <DockIcon key={a.name} item={a} />
        ))}
        <div className="relative w-[27px] shrink-0">
          <svg width="27" height="66" viewBox="0 0 27 66" stroke="#9c988a" strokeWidth="1.200">
            <path d="M6 28l12 30" />
          </svg>
        </div>
        {shelf.map((a) => (
          <DockIcon key={a.name} item={a} />
        ))}
      </div>
    </footer>
  );
}

export default function App() {
  return (
    <div className="flex h-screen flex-col overflow-hidden bg-white font-['Noto_Sans','Open_Sans',sans-serif]">
      <MenuBar />
      <section className="flex min-h-0 flex-1 flex-col border-t border-[#888]">
        <TabStrip />
        <div className="flex flex-col border-b border-[#a8a8a8] bg-linear-to-b from-[#ebebeb] to-[#cbcbcb] to-60%">
          <NavBar />
          <Bookmarks />
        </div>
        <ZooPage />
      </section>
      <Dock />
    </div>
  );
}
